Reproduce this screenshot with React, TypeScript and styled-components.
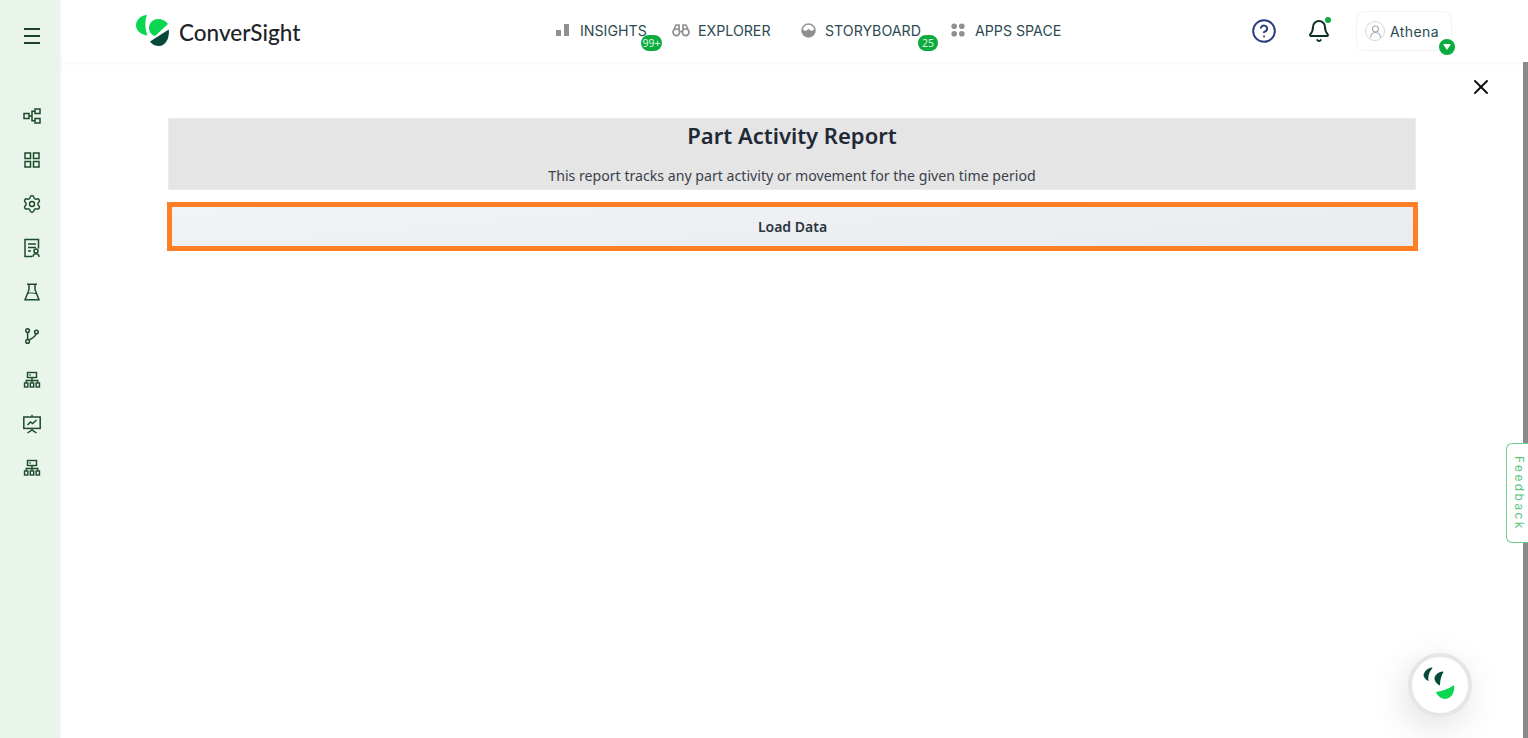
import React, { ReactNode } from "react"
import styled, { createGlobalStyle } from "styled-components"
import { X, Settings, Bell, CircleHelp } from "lucide-react"

const GlobalStyle = createGlobalStyle`
    html, body {
        margin: 0;
        padding: 0;
        height: 100%;
        background: #fff;
        overflow: hidden;
    }
    body {
        font-family: "Noto Sans", "Open Sans", sans-serif;
    }
`

const Page = styled.div`
    position: relative;
    display: flex;
    width: 1528px;
    height: 738px;
    overflow: hidden;
`

const Sidebar = styled.aside`
    flex: 0 0 60px;
    display: flex;
    flex-direction: column;
    align-items: center;
    padding: 26px 0 0 4px;
    box-sizing: border-box;
    background: #e9f5ea;
    box-shadow: 1px 0 2px rgba(0, 0, 0, 0.05);
    z-index: 2;
`

const SideList = styled.div`
    margin-top: 60px;
    display: flex;
    flex-direction: column;
    align-items: center;
    gap: 24px;
`

const SideIcon = styled.div`
    width: 20px;
    height: 20px;
    display: flex;
    align-items: center;
    justify-content: center;
    color: #1d4a2a;
`

const Main = styled.div`
    flex: 1;
    display: flex;
    flex-direction: column;
    min-width: 0;
`

const Header = styled.header`
    flex: 0 0 62px;
    display: flex;
    align-items: flex-start;
    padding-left: 76px;
    box-sizing: border-box;
    background: #fff;
    box-shadow: 0 1px 5px rgba(0, 0, 0, 0.04);
`

const Logo = styled.div`
    flex: 0 0 166px;
    display: flex;
    align-items: center;
    gap: 9px;
    height: 34px;
    margin-top: 14px;
`

const LogoWord = styled.span`
    font-family: "Lato", sans-serif;
    font-size: 22.5px;
    font-weight: 500;
    color: #1d2326;
    margin-top: 3px;
`

const Nav = styled.nav`
    margin-left: 254px;
    display: grid;
    grid-template-columns: 116px 129px 150px 110px;
    height: 20px;
    margin-top: 20px;
`

const NavItem = styled.div<{ $gap: number }>`
    position: relative;
    display: flex;
    align-items: center;
    gap: ${({ $gap }) => $gap}px;
    font-family: "Inter", sans-serif;
    font-size: 14.2px;
    font-weight: 400;
    color: #2c4a52;
    white-space: nowrap;
`

const NavIcon = styled.span`
    display: flex;
    align-items: center;
    color: #8f8f8f;
`

const Badge = styled.span<{ $left: number; $size: number }>`
    position: absolute;
    left: ${({ $left }) => $left}px;
    top: 15px;
    min-width: ${({ $size }) => $size}px;
    height: 16px;
    padding: 0 1px;
    box-sizing: border-box;
    border-radius: 8px;
    background: #0bab3e;
    color: #dff5e4;
    font-family: "Noto Sans", sans-serif;
    font-size: 10.5px;
    line-height: 16px;
    text-align: center;
`

const Tools = styled.div`
    margin-left: 190px;
    margin-top: 11px;
    display: flex;
    align-items: flex-start;
`

const ToolButton = styled.div<{ $width: number }>`
    position: relative;
    width: ${({ $width }) => $width}px;
    height: 40px;
    display: flex;
    align-items: center;
`

const BellDot = styled.span`
    position: absolute;
    left: 18px;
    top: 6px;
    width: 6px;
    height: 6px;
    border-radius: 50%;
    background: #0bab3e;
`

const UserBox = styled.div`
    position: relative;
    width: 96px;
    height: 40px;
    box-sizing: border-box;
    display: flex;
    align-items: center;
    gap: 5px;
    padding-left: 8px;
    border: 1px solid #f1f2f1;
    border-radius: 8px;
    font-family: "Inter", sans-serif;
    font-size: 14px;
    letter-spacing: 0.4px;
    color: #2c4a52;
`

const Avatar = styled.span`
    width: 20px;
    height: 20px;
    box-sizing: border-box;
    border: 1px solid #d8d8d8;
    border-radius: 50%;
    display: flex;
    align-items: center;
    justify-content: center;
`

const Caret = styled.span`
    position: absolute;
    right: -4px;
    bottom: -5px;
    width: 16px;
    height: 16px;
    border-radius: 50%;
    background: #0bab3e;
    display: flex;
    align-items: center;
    justify-content: center;
`

const Body = styled.div`
    flex: 1;
    display: flex;
    min-height: 0;
`

const Content = styled.main`
    flex: 1;
    display: flex;
    flex-direction: column;
    padding: 0 107px 0 108px;
    min-width: 0;
`

const CloseRow = styled.div`
    height: 56px;
    display: flex;
    justify-content: flex-end;
    align-items: flex-start;
    padding-top: 13px;
    box-sizing: border-box;
    margin-right: -77px;
    color: #111;
`

const TitlePanel = styled.section`
    height: 72px;
    background: #e5e5e5;
    box-sizing: border-box;
    border: 1px solid #ececec;
    display: flex;
    flex-direction: column;
    align-items: center;
`

const Title = styled.h1`
    margin: 0;
    font-size: 22px;
    line-height: 33px;
    font-weight: 600;
    color: #1f2a37;
`

const Subtitle = styled.p`
    margin: 0;
    padding-top: 14px;
    font-size: 14.15px;
    line-height: 20px;
    color: #3a414b;
`

const LoadButton = styled.button`
    margin: 12px -2px 0 -1px;
    height: 49px;
    box-sizing: border-box;
    border: 5px solid #ff7f27;
    background: linear-gradient(175deg, #f2f3f5, #e9ebef);
    font-family: "Noto Sans", sans-serif;
    font-size: 14px;
    font-weight: 600;
    color: #2b3440;
    padding: 0;
`

const ScrollThumb = styled.div`
    flex: 0 0 5px;
    background: #8a8a8a;
`

const Feedback = styled.div`
    position: absolute;
    right: 0;
    top: 443px;
    width: 22px;
    height: 100px;
    box-sizing: border-box;
    background: #fff;
    border: 1px solid #6fd08a;
    border-right: none;
    border-radius: 6px 0 0 6px;
    padding-left: 3px;
    display: flex;
    align-items: center;
    justify-content: center;
    writing-mode: vertical-rl;
    font-family: "Inter", sans-serif;
    font-size: 12px;
    letter-spacing: 2.4px;
    color: #5cc77c;
`

const ChatBubble = styled.div`
    position: absolute;
    left: 1408px;
    top: 653px;
    width: 64px;
    height: 64px;
    box-sizing: border-box;
    border: 4px solid #e6e6e6;
    border-radius: 50%;
    background: #fff;
    box-shadow: -4px 10px 36px rgba(0, 0, 0, 0.12);
    display: flex;
    align-items: center;
    justify-content: center;
`

const MenuIcon = () => (
    <svg width="18" height="16" viewBox="0 0 18 16" fill="none" stroke="#1a4026" strokeWidth="1.8">
        <path d="M1 1h16M1 8h16M1 15h16" />
    </svg>
)

const GridIcon = () => (
    <svg width="16" height="16" viewBox="0 0 16 16" fill="none" stroke="currentColor" strokeWidth="1.5">
        <rect x="1" y="1" width="5.500" height="5.500" />
        <rect x="9.500" y="1" width="5.500" height="5.500" />
        <rect x="1" y="9.500" width="5.500" height="5.500" />
        <rect x="9.500" y="9.500" width="5.500" height="5.500" />
    </svg>
)

const FlaskIcon = () => (
    <svg width="18" height="18" viewBox="0 0 18 18" fill="none" stroke="currentColor" strokeWidth="1.5">
        <path d="M4 1.200h10M6 1.200v5.500L2 16.800h14L12 6.700V1.200" />
        <path d="M5 10.500c2-1.200 5-.2 8 0" strokeWidth="1" />
    </svg>
)

const BranchIcon = () => (
    <svg width="14" height="16" viewBox="0 0 14 16" fill="none" stroke="currentColor" strokeWidth="1.5">
        <circle cx="2.600" cy="2.600" r="1.800" />
        <circle cx="11.400" cy="4" r="1.800" />
        <circle cx="2.600" cy="13.400" r="1.800" />
        <path d="M2.600 4.400v7.200M11 5.800c-.3 3-4 4.500-7 6.300" />
    </svg>
)

const OrgChart = () => (
    <svg width="18" height="18" viewBox="0 0 18 18" fill="none" stroke="currentColor" strokeWidth="1.4">
        <rect x="4.5" y="1.5" width="9" height="5" />
        <path d="M6 4h2" strokeWidth="1" />
        <path d="M9 6.5V9M3.2 12V9.5h11.6V12M9 9v3" />
        <rect x="1.5" y="12" width="3.4" height="4" />
        <rect x="7.3" y="12" width="3.4" height="4" />
        <rect x="13.1" y="12" width="3.4" height="4" />
    </svg>
)

const FlowIcon = () => (
    <svg width="18" height="16" viewBox="0 0 18 16" fill="none" stroke="currentColor" strokeWidth="1.5">
        <rect x="1" y="5.5" width="5" height="5" />
        <rect x="12" y="1" width="5" height="4.5" />
        <rect x="12" y="10.5" width="5" height="4.5" />
        <path d="M6 8h3M12 3.2H9v9.6h3" />
    </svg>
)

const ReportIcon = () => (
    <svg width="18" height="20" viewBox="0 0 18 20" fill="none" stroke="currentColor" strokeWidth="1.5">
        <path d="M9 18.5H2V1.5h13.5v9" />
        <path d="M5 6h8M5 9.5h8M5 13h3" />
        <circle cx="13" cy="13" r="2" />
        <path d="M9.8 18.8c.4-2 1.7-3 3.2-3s2.8 1 3.2 3" />
    </svg>
)

const BoardIcon = () => (
    <svg width="20" height="20" viewBox="0 0 20 20" fill="none" stroke="currentColor" strokeWidth="1.5">
        <path d="M10 .8v2" />
        <rect x="1.8" y="3" width="16.4" height="11.4" />
        <path d="M5.5 11l3-3 2 1.6L14.5 6" />
        <path d="M10 14.4v1.4M5.5 19l4.5-3.2 4.5 3.2" />
    </svg>
)

const LogoMark = () => (
    <svg width="34" height="32" viewBox="0 0 34 32">
        <path d="M11 0C4.500 .5 0 5 0 10.500 0 15.500 4.500 19.500 11.500 20.500 9 14 8.500 6 11 0Z" fill="#0bd651" />
        <path d="M13 13C13 8 17 4 22 4 26 4 29.500 5.500 32 9L19 21C15.500 20 13 17 13 13Z" fill="#0bd651" />
        <path d="M32.800 14.500C33.800 24 29 31 23 31 19.500 31 16 29.500 14 26.500Z" fill="#04493a" />
    </svg>
)

const FaceMark = () => (
    <svg width="34" height="36" viewBox="0 0 34 36">
        <path d="M9 .5C4.500 1 1 4.500.5 8.500 1 11 3.500 13.500 5.500 14 5 9.500 6 4.500 9.500 1Z" fill="#04493a" />
        <path d="M20 4.500C15 5 11.500 8 11.500 12 12 15 14.500 17.500 17 18.500 17 13.500 18 9 20.500 5Z" fill="#04493a" />
        <path d="M31 18C26 21.500 20 24 13 25 15 30 20 33 24.500 31.500 29.500 30 32 24 31 18Z" fill="#0bd651" />
    </svg>
)

const navItems: { label: string; gap: number; icon: ReactNode; badge?: { text: string; left: number; size: number } }[] = [
    {
        label: "INSIGHTS",
        gap: 10,
        icon: (
            <svg width="14" height="14" viewBox="0 0 14 14" fill="currentColor">
                <rect x="0" y="7" width="5" height="6" />
                <rect x="8" y="1" width="5" height="12" />
            </svg>
        ),
        badge: { text: "99+", left: 85, size: 21 },
    },
    {
        label: "EXPLORER",
        gap: 8,
        icon: (
            <svg width="18" height="14" viewBox="0 0 18 14" fill="none" stroke="currentColor" strokeWidth="1.700">
                <circle cx="4.300" cy="9.300" r="3.300" />
                <circle cx="13.700" cy="9.300" r="3.300" />
                <path d="M7.500 8.500h3M2 6.500 4 2h3v5M16 6.500 14 2h-3v5" />
            </svg>
        ),
    },
    {
        label: "STORYBOARD",
        gap: 9,
        icon: (
            <svg width="15" height="15" viewBox="0 0 15 15">
                <circle cx="7.500" cy="7.500" r="7.200" fill="#8f8f8f" />
                <path d="M1.800 6.500C2.500 3.500 4.800 1.800 7.500 1.800s5 1.700 5.700 4.700c-1 .8-2.200 1.200-3.200 1.200L7.500 6 5 7.700c-1 0-2.200-.4-3.200-1.200Z" fill="#fff" />
            </svg>
        ),
        badge: { text: "25", left: 117, size: 20 },
    },
    {
        label: "APPS SPACE",
        gap: 10,
        icon: (
            <svg width="14" height="14" viewBox="0 0 14 14" fill="currentColor">
                <circle cx="3.200" cy="3.200" r="2.800" />
                <circle cx="10.800" cy="3.200" r="2.800" />
                <circle cx="3.200" cy="10.800" r="2.800" />
                <circle cx="10.800" cy="10.800" r="2.800" />
            </svg>
        ),
    },
]

const sideIcons: ReactNode[] = [
    <FlowIcon key="flow" />,
    <GridIcon key="grid" />,
    <Settings key="settings" size={20} strokeWidth={1.7} />,
    <ReportIcon key="report" />,
    <FlaskIcon key="flask" />,
    <BranchIcon key="branch" />,
    <OrgChart key="org1" />,
    <BoardIcon key="board" />,
    <OrgChart key="org2" />,
]

const App = (): JSX.Element => (
    <Page>
        <GlobalStyle />
        <Sidebar>
            <SideIcon>
                <MenuIcon />
            </SideIcon>
            <SideList>
                {sideIcons.map((icon, i) => (
                    <SideIcon key={i}>{icon}</SideIcon>
                ))}
            </SideList>
        </Sidebar>
        <Main>
            <Header>
                <Logo>
                    <LogoMark />
                    <LogoWord>ConverSight</LogoWord>
                </Logo>
                <Nav>
                    {navItems.map((item) => (
                        <NavItem key={item.label} $gap={item.gap}>
                            <NavIcon>{item.icon}</NavIcon>
                            {item.label}
                            {item.badge && (
                                <Badge $left={item.badge.left} $size={item.badge.size}>
                                    {item.badge.text}
                                </Badge>
                            )}
                        </NavItem>
                    ))}
                </Nav>
                <Tools>
                    <ToolButton $width={56}>
                        <CircleHelp size={26} color="#2c3e7a" strokeWidth={1.8} />
                    </ToolButton>
                    <ToolButton $width={49}>
                        <Bell size={24} color="#0c2f27" strokeWidth={2} />
                        <BellDot />
                    </ToolButton>
                    <UserBox>
                        <Avatar>
                            <svg width="13" height="13" viewBox="0 0 13 13" fill="none" stroke="#a8a8a8" strokeWidth="1.100">
                                <circle cx="6.500" cy="4" r="3" />
                                <path d="M1.500 12.500c0-3 2-5 5-5s5 2 5 5" />
                            </svg>
                        </Avatar>
                        Athena
                        <Caret>
                            <svg width="8" height="6" viewBox="0 0 8 6">
                                <path d="M0 0h8L4 6Z" fill="#fff" />
                            </svg>
                        </Caret>
                    </UserBox>
                </Tools>
            </Header>
            <Body>
                <Content>
                    <CloseRow>
                        <X size={24} strokeWidth={2} />
                    </CloseRow>
                    <TitlePanel>
                        <Title>Part Activity Report</Title>
                        <Subtitle>This report tracks any part activity or movement for the given time period</Subtitle>
                    </TitlePanel>
                    <LoadButton>Load Data</LoadButton>
                </Content>
                <ScrollThumb />
            </Body>
        </Main>
        <Feedback>Feedback</Feedback>
        <ChatBubble>
            <FaceMark />
        </ChatBubble>
    </Page>
)

export default App
